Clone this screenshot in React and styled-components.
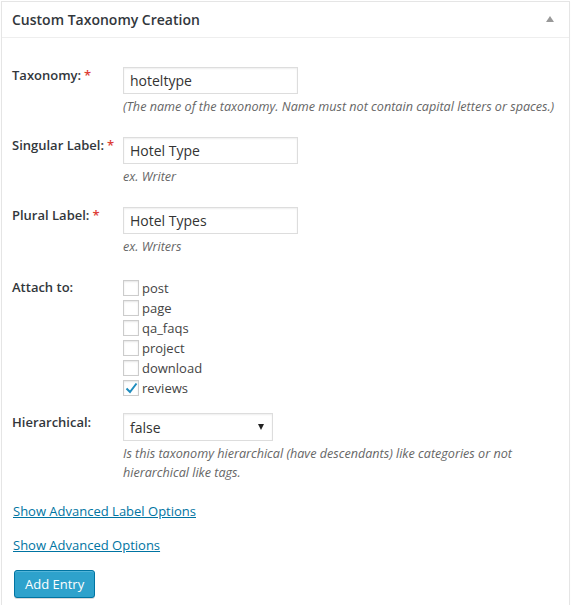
import React from 'react';
import styled, { createGlobalStyle } from 'styled-components';

const GlobalStyle = createGlobalStyle`
  body {
    margin: 0;
    background: #fff;
    font-family: "Open Sans", "Liberation Sans", sans-serif;
    color: #222;
  }
`;

const Page = styled.div`
  padding: 1px 1px 0 1px;
`;

const Panel = styled.section`
  border: 1px solid #e5e5e5;
  border-bottom: none;
  background: #fff;
  box-shadow: 0 1px 1px rgba(0, 0, 0, 0.04);
  min-height: 603px;
`;

const PanelHeader = styled.header`
  display: flex;
  align-items: center;
  justify-content: space-between;
  height: 35px;
  padding: 0 15px 0 10px;
  border-bottom: 1px solid #eee;
`;

const Title = styled.h3`
  margin: 0;
  font-size: 14px;
  font-weight: 600;
  color: #32373c;
  line-height: 20px;
`;

const Toggle = styled.span`
  width: 0;
  height: 0;
  border-left: 4px solid transparent;
  border-right: 4px solid transparent;
  border-bottom: 6px solid #999;
  margin-top: -1px;
`;

const PanelBody = styled.div`
  padding: 19px 10px 0 10px;
`;

const Row = styled.div`
  display: grid;
  grid-template-columns: 111px 1fr;
  padding-bottom: ${({ $bottom }) => $bottom}px;
`;

const Label = styled.label`
  padding-top: ${({ $top }) => $top}px;
  font-size: 13px;
  font-weight: 600;
  line-height: 20px;
  color: #32373c;
`;

const Required = styled.span`
  color: #dd3d36;
  margin-left: 3px;
`;

const Field = styled.div`
  padding-top: ${({ $top }) => $top}px;
  padding-right: 2px;
`;

const TextInput = styled.input`
  box-sizing: border-box;
  width: 175px;
  height: 27px;
  padding: 2px 6px;
  border: 1px solid #ddd;
  box-shadow: inset 0 1px 2px rgba(0, 0, 0, 0.07);
  font-family: "Open Sans", "Liberation Sans", sans-serif;
  font-size: 14px;
  color: #333;
  background: #fff;
  outline: none;
`;

const Hint = styled.p`
  margin: ${({ $gap }) => $gap}px 0 0 0;
  font-size: 12.6px;
  font-style: italic;
  line-height: 19px;
  color: #666;
`;

const CheckList = styled.ul`
  list-style: none;
  margin: 0;
  padding: 0;
`;

const CheckItem = styled.li`
  display: flex;
  align-items: center;
  height: 20px;
  font-size: 13px;
  color: #444;
`;

const Box = styled.span`
  box-sizing: border-box;
  display: inline-flex;
  align-items: center;
  justify-content: center;
  width: 16px;
  height: 16px;
  margin-right: 3px;
  border: 1px solid #ccc;
  box-shadow: inset 0 1px 2px rgba(0, 0, 0, 0.1);
  background: #fff;
`;

const Select = styled.div`
  box-sizing: border-box;
  display: flex;
  align-items: center;
  justify-content: space-between;
  width: 150px;
  height: 28px;
  padding: 0 8px 0 6px;
  border: 1px solid #ddd;
  box-shadow: inset 0 1px 2px rgba(0, 0, 0, 0.07);
  font-size: 14px;
  color: #333;
`;

const Caret = styled.span`
  width: 0;
  height: 0;
  border-left: 3px solid transparent;
  border-right: 3px solid transparent;
  border-top: 6px solid #222;
`;

const Links = styled.div`
  display: flex;
  flex-direction: column;
  align-items: flex-start;
  gap: 14px;
  margin-top: 19px;
`;

const Link = styled.a`
  font-size: 13px;
  line-height: 20px;
  color: #0074a2;
  text-decoration: underline;
  cursor: pointer;
  margin-left: 1px;
`;

const Button = styled.button`
  margin: 15px 0 0 2px;
  height: 28px;
  padding: 0 10px 1px;
  border: 1px solid #0074a2;
  border-radius: 3px;
  background: #2ea2cc;
  box-shadow: inset 0 1px 0 rgba(120, 200, 230, 0.5), 0 1px 0 rgba(0, 0, 0, 0.15);
  color: #fff;
  font-family: "Open Sans", "Liberation Sans", sans-serif;
  font-size: 13px;
  cursor: pointer;
`;

const postTypes = [
  { name: 'post', checked: false },
  { name: 'page', checked: false },
  { name: 'qa_faqs', checked: false },
  { name: 'project', checked: false },
  { name: 'download', checked: false },
  { name: 'reviews', checked: true },
];

const Check = () => (
  <svg width="13" height="12" viewBox="0 0 13 12">
    <path d="M1.5 6.5 L5 10 L11.5 1.5" fill="none" stroke="#1e8cbe" strokeWidth="2" />
  </svg>
);

const TextRow = ({ label, value, hint }) => (
  <Row $bottom={11}>
    <Label $top={8}>
      {label}:<Required>*</Required>
    </Label>
    <Field $top={10}>
      <TextInput defaultValue={value} />
      <Hint $gap={3}>{hint}</Hint>
    </Field>
  </Row>
);

const App = () => {
  return (
    <Page>
      <GlobalStyle />
      <Panel>
        <PanelHeader>
          <Title>Custom Taxonomy Creation</Title>
          <Toggle />
        </PanelHeader>
        <PanelBody>
          <TextRow
            label="Taxonomy"
            value="hoteltype"
            hint="(The name of the taxonomy. Name must not contain capital letters or spaces.)"
          />
          <TextRow label="Singular Label" value="Hotel Type" hint="ex. Writer" />
          <TextRow label="Plural Label" value="Hotel Types" hint="ex. Writers" />

          <Row $bottom={5}>
            <Label $top={10}>Attach to:</Label>
            <Field $top={11}>
              <CheckList>
                {postTypes.map((type) => (
                  <CheckItem key={type.name}>
                    <Box>{type.checked && <Check />}</Box>
                    {type.name}
                  </CheckItem>
                ))}
              </CheckList>
            </Field>
          </Row>

          <Row $bottom={0}>
            <Label $top={9}>Hierarchical:</Label>
            <Field $top={10}>
              <Select>
                false
                <Caret />
              </Select>
              <Hint $gap={3}>
                Is this taxonomy hierarchical (have descendants) like categories or not hierarchical like tags.
              </Hint>
            </Field>
          </Row>

          <Links>
            <Link>Show Advanced Label Options</Link>
            <Link>Show Advanced Options</Link>
          </Links>
          <Button>Add Entry</Button>
        </PanelBody>
      </Panel>
    </Page>
  );
};

export default App;
